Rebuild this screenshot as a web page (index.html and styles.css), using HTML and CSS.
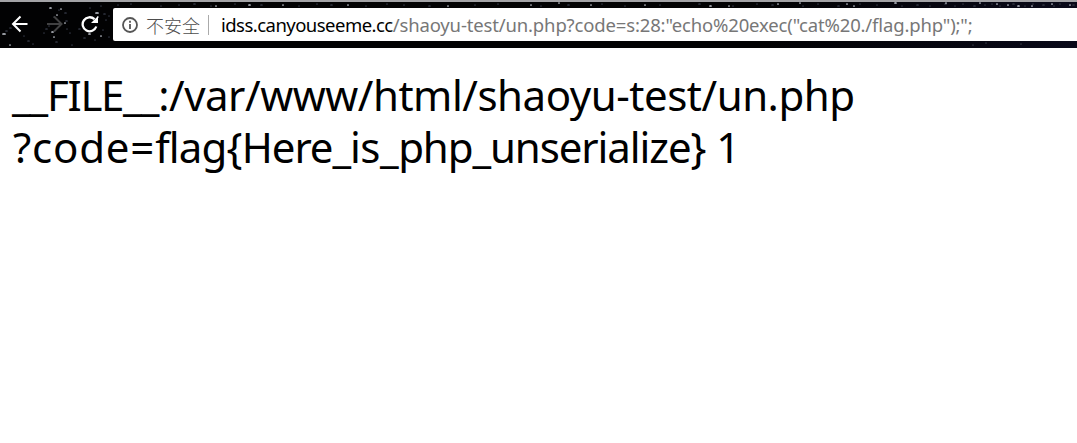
FILE: index.html
```html
<!DOCTYPE html>
<html lang="zh-CN">
<head>
<meta charset="utf-8">
<title>un.php</title>
<link rel="stylesheet" href="styles.css">
</head>
<body>
<header class="toolbar">
<svg class="stars" width="1077" height="48" viewBox="0 0 1077 48" aria-hidden="true">
<path class="star faint" d="M6 31h1M10 28h1M17 26h0M24 36h0M28 41h1M44 33h0M46 29h1M49 26h0M54 17h0M59 10h0M65 13h1M66 21h1M67 29h0M70 33h0M79 29h1M84 38h1M90 8h0M95 40h0M101 6h0M104 14h1M106 20h0M109 16h0M103 30h0M109 37h0M33 44h0M56 42h1M72 45h0M118 5h0M131 4h0M161 6h0M179 5h0M194 4h1M211 6h0M235 4h0M261 5h1M299 6h0M317 4h0M331 5h1M366 6h0M387 4h0M404 5h0M429 6h1M475 5h0M498 4h0M541 6h0M568 5h1M602 4h0M625 6h0M660 5h0M699 4h1M733 6h0M757 4h0M772 5h1M803 6h0M818 4h0M838 6h1M860 4h0M877 5h0M902 6h0M917 5h1M930 6h0M945 4h1M955 6h0M963 4h0M974 6h1M985 5h0M992 4h0M1000 6h0M1013 4h1M1025 6h0M1033 4h0M1043 5h1M1054 6h0M1060 4h0M1073 5h1M973 45h0M986 43h0M1021 44h0"/>
<path class="star" d="M50 8h1M61 9h0M57 15h0M3 34h2M10 45h0M52 32h1M54 37h0M65 23h0M96 13h2M98 17h0M89 34h1M101 36h0M216 6h0M249 5h1M283 5h0M348 5h0M448 6h0M531 5h0M559 3h0M591 5h0M645 5h0M710 6h1M729 6h0M778 4h0M800 3h0M847 4h0M854 6h0M895 3h1M946 3h0M980 3h0M997 4h0M1008 5h0M1018 6h1M1032 6h0M1052 4h0M1070 5h0"/>
</svg>
<nav class="nav">
<svg class="icon" viewBox="0 0 18 18"><path d="M16.500 9H2M9.500 1.500L2 9L9.500 16.500"/></svg>
<svg class="icon disabled" viewBox="0 0 18 18"><path d="M1 9h14.500M8 1.500L15.500 9L8 16.500"/></svg>
<svg class="icon reload" viewBox="0 0 18 18"><path d="M15.300 11.500A7 7 0 1 1 13.500 4.200"/><path class="head" d="M17 1v7h-7z"/></svg>
</nav>
<div class="address">
<svg class="info" viewBox="0 0 16 16"><circle cx="8" cy="8" r="7"/><path d="M8 7v5M8 3.800v2"/></svg>
<span class="security">不安全</span><span class="divider"></span>
<span class="url"><span class="host">idss.canyouseeme.cc</span><span class="path">/shaoyu-test/un.php?code=s:28:"echo%20exec("cat%20./flag.php");";</span></span>
</div>
</header>
<main class="output">
<div class="line"><span class="tighter">__</span><span class="tightest">FILE</span><span class="tighter">__</span><span class="snug">:/var/www/html/shaoyu-test/un.php</span></div>
<div class="line query"><span class="loose">?code=</span><span class="tight">flag{</span><span class="tighter">Here_</span><span class="snug">is_</span><span class="tighter">php_unserialize}</span><span> 1</span></div>
</main>
</body>
</html>
```
FILE: styles.css
```css
body {
  margin: 0;
  background: #fff;
  color: #000;
  font-family: "Noto Sans", "Noto Sans CJK SC", sans-serif;
}
.toolbar {
  position: relative;
  box-sizing: border-box;
  height: 48px;
  border-top: 2px solid #a3a3a6;
  background: linear-gradient(90deg, #020203 70%, #090919);
  display: flex;
}
.stars { position: absolute; left: 0; top: -2px; }
.star {
  fill: none;
  stroke: #c5c9d2;
  stroke-width: 1.7;
  stroke-linecap: round;
}
.faint { stroke: #303440; }
.nav {
  position: relative;
  box-sizing: border-box;
  width: 113px;
  flex: none;
  display: flex;
  gap: 17px;
  padding: 13px 0 0 11px;
}
.icon {
  width: 18px;
  height: 18px;
  flex: none;
  fill: none;
  stroke: #fff;
  stroke-width: 2;
}
.disabled { stroke: #414142; }
.reload { stroke-width: 2.3; }
.head { fill: #fff; stroke: none; }
.address {
  position: relative;
  display: flex;
  align-items: center;
  height: 33px;
  margin-top: 6px;
  flex: 1;
  border-radius: 2px 0 0 2px;
  background: #fff;
  white-space: nowrap;
  font-size: 18.5px;
}
.info {
  width: 16px;
  height: 16px;
  margin-left: 9px;
  fill: none;
  stroke: #555;
  stroke-width: 1.8;
}
.security {
  width: 62px;
  margin-left: 8px;
  font-size: 18px;
  font-weight: 300;
  font-family: "Noto Sans CJK SC", sans-serif;
  color: #4d4d4d;
}
.divider { width: 1px; height: 20px; background: #aaa; }
.url { margin-left: 12px; }
.host { letter-spacing: -0.53px; }
.path { color: #777; letter-spacing: -0.15px; }
.output { padding: 21px 12px; }
.line { font-size: 42px; line-height: 52px; white-space: nowrap; }
.query { padding-left: 1px; }
.snug { letter-spacing: -0.47px; }
.tight { letter-spacing: -0.8px; }
.tighter { letter-spacing: -1.1px; }
.tightest { letter-spacing: -1.35px; }
.loose { letter-spacing: 0.8px; }
```
